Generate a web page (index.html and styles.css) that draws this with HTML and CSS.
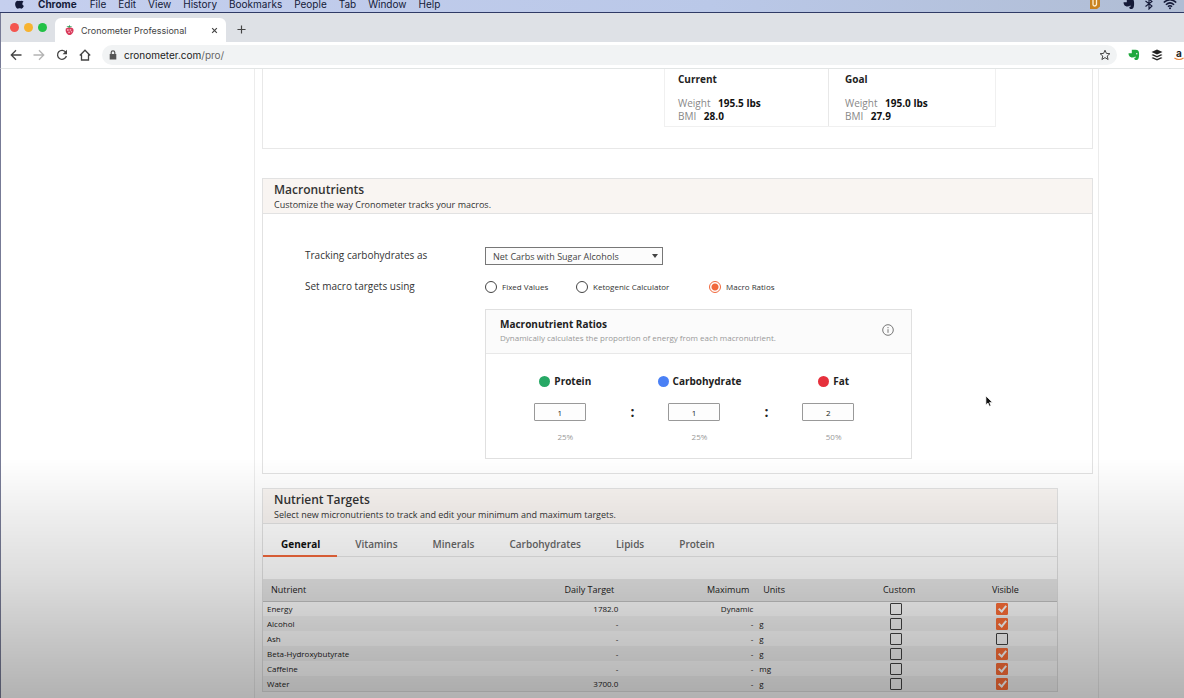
FILE: index.html
```html
<!DOCTYPE html>
<html lang="en">

<head>
    <meta charset="UTF-8">
    <meta name="viewport" content="width=device-width, initial-scale=1.0">
    <title>Cronometer Professional</title>
    <link rel="stylesheet" href="styles.css">
</head>

<body>

    <!-- System menu bar -->
    <nav class="menubar">
        <svg class="apple" viewBox="0 0 12 14"><path d="M8.2 0c.1 1.400-1 2.600-2.300 2.700C5.800 1.400 7 .2 8.200 0zM6 3.600c.7 0 1.300-.5 2.300-.5 1 0 1.900.5 2.400 1.300-2 1.200-1.700 3.900.4 4.700-.5 1.500-1.600 3.300-2.800 3.300-.8 0-1.200-.5-2.200-.5s-1.400.5-2.200.5C2.500 12.400.9 9.600.9 7.200c0-2.500 1.500-4 3.100-4 .9 0 1.500.4 2 .4z"/></svg>
        <strong>Chrome</strong>
        <span>File</span>
        <span>Edit</span>
        <span>View</span>
        <span>History</span>
        <span>Bookmarks</span>
        <span>People</span>
        <span>Tab</span>
        <span>Window</span>
        <span>Help</span>
        <div class="status">
            <svg class="status-note" viewBox="0 0 12 12"><path fill="#c98220" d="M1 0h10v8.500L8 11H1z"/><path fill="none" stroke="#fff0d0" stroke-width="1.300" d="M4 0v6.500q0 1.500 1.500 1.500T7.500 6.500V1"/></svg>
            <svg class="status-evernote" viewBox="0 0 12 12"><path fill="#141a38" d="M3.800.8h3.700c2.500.2 3.300 1 3.500 3 .2 2 .1 4.500-.6 6-.7 1.500-3.800 1.800-4.100 0-.1-1.200 1-1.500 1.800-1.200L7.300 7.400C5.500 9 2.500 8.800 1.300 7 .6 6 .5 5 .6 4.200h3.200z"/></svg>
            <svg class="status-bluetooth" viewBox="0 0 10 12"><path fill="none" stroke="#141a38" stroke-width="1.100" d="M1.500 3l6.500 5-3 3V1l3 2.500L1.500 8.500"/></svg>
            <svg class="status-wifi" viewBox="0 0 14 11"><path fill="none" stroke="#141a38" stroke-width="1.500" d="M.8 4q6.200-5.500 12.400 0M2.900 6.200q4.100-3.600 8.200 0M4.900 8.200q2.100-1.700 4.200 0"/><circle cx="7" cy="9.700" r="1" fill="#141a38"/></svg>
        </div>
    </nav>

    <!-- Browser window -->
    <header class="browser">
        <div class="tabstrip">
            <span class="dot dot-red"></span>
            <span class="dot dot-yellow"></span>
            <span class="dot dot-green"></span>
            <div class="tab">
                <svg class="favicon" viewBox="0 0 12 12"><path fill="#d8395a" d="M2 4.500C3 3 9 2.600 10 4.500c1.500 3-1.500 7-4 7S1 7.500 2 4.500z"/><path fill="#2c9a55" d="M5.500 3.500L2.500 1.500 5.300 2 6 .3l.6 1.500 2.600.3z"/><g fill="#f7a7b5"><circle cx="4.200" cy="6" r="1"/><circle cx="7" cy="5.800" r="1"/><circle cx="5.500" cy="8.500" r="1"/><circle cx="8.200" cy="8" r=".8"/></g></svg>
                <span class="tab-title">Cronometer Professional</span>
                <button class="icon-button tab-close" aria-label="Close tab"><svg viewBox="0 0 8 8"><path d="M1.300 1.300l5.400 5.400M6.700 1.300L1.300 6.700"/></svg></button>
            </div>
            <button class="icon-button new-tab" aria-label="New tab"><svg viewBox="0 0 10 10"><path d="M5 .5v9M.5 5h9"/></svg></button>
        </div>
        <div class="toolbar">
            <button class="icon-button" aria-label="Back"><svg viewBox="0 0 12 12"><path d="M11.500 6H1.500M6 1.300L1.300 6 6 10.700"/></svg></button>
            <button class="icon-button forward" aria-label="Forward"><svg viewBox="0 0 12 12"><path d="M.5 6h10M6 1.300L10.700 6 6 10.700"/></svg></button>
            <button class="icon-button" aria-label="Reload"><svg viewBox="0 0 12 12"><path d="M9.800 3.300A4.500 4.500 0 1 0 10.400 7"/><path fill="#444" stroke="none" d="M11 .8v4.400H6.600z"/></svg></button>
            <button class="icon-button" aria-label="Home"><svg viewBox="0 0 12 12"><path d="M.8 6.500L6 1.200l5.200 5.300M2.500 5.500V11h7V5.500"/></svg></button>
            <div class="address">
                <svg class="lock" viewBox="0 0 8 10"><path fill="#555" d="M.7 4h6.600v5.500H.7z"/><path fill="none" stroke="#555" stroke-width="1.200" d="M2.200 4V2.600a1.800 1.800 0 0 1 3.600 0V4"/></svg>
                <span class="url">cronometer.com<span class="path">/pro/</span></span>
                <button class="icon-button star" aria-label="Bookmark this page"><svg viewBox="0 0 12 12"><path d="M6 1.200l1.400 3.200 3.500.3-2.700 2.300.9 3.500L6 8.600l-3.100 1.900.9-3.500L1.100 4.700l3.500-.3z"/></svg></button>
            </div>
            <div class="extensions">
                <svg viewBox="0 0 12 12"><path fill="#1fa83c" d="M3.800.8h3.700c2.500.2 3.300 1 3.500 3 .2 2 .1 4.500-.6 6-.7 1.500-3.800 1.800-4.100 0-.1-1.200 1-1.500 1.800-1.200L7.300 7.400C5.500 9 2.500 8.800 1.300 7 .6 6 .5 5 .6 4.200h3.200z"/><circle cx="8.800" cy="4.800" r=".7" fill="#fff"/></svg>
                <svg viewBox="0 0 12 12"><path fill="#222" d="M6 .5l5.500 2.500L6 5.500.5 3zM.5 6L2 5.300l4 1.800 4-1.800 1.500.7L6 8.500zM.5 9L2 8.300l4 1.800 4-1.800 1.500.7L6 11.500z"/></svg>
                <div class="amazon">a<svg viewBox="0 0 12 4"><path fill="none" stroke="#e9863c" stroke-width="1.300" d="M.5.8q5.500 3.500 11 0"/></svg></div>
            </div>
        </div>
    </header>

    <main class="page">
        <div class="content">

            <section class="card profile">
                <div class="stats">
                    <div class="stat">
                        <h3>Current</h3>
                        <p>Weight <strong>195.5 lbs</strong></p>
                        <p>BMI <strong>28.0</strong></p>
                    </div>
                    <div class="stat">
                        <h3>Goal</h3>
                        <p>Weight <strong>195.0 lbs</strong></p>
                        <p>BMI <strong>27.9</strong></p>
                    </div>
                </div>
            </section>

            <section class="card macros">
                <div class="card-header">
                    <h2>Macronutrients</h2>
                    <p>Customize the way Cronometer tracks your macros.</p>
                </div>
                <div class="macro-form">
                    <label class="form-label" for="carbs">Tracking carbohydrates as</label>
                    <div class="select-wrap">
                        <select id="carbs">
                            <option>Net Carbs with Sugar Alcohols</option>
                        </select>
                    </div>
                    <span class="form-label" id="targets-label">Set macro targets using</span>
                    <div class="radios" role="radiogroup" aria-labelledby="targets-label">
                        <label><input type="radio" name="targets">Fixed Values</label>
                        <label><input type="radio" name="targets">Ketogenic Calculator</label>
                        <label><input type="radio" name="targets" checked>Macro Ratios</label>
                    </div>
                    <div class="ratio-panel">
                        <div class="ratio-header">
                            <div>
                                <h3>Macronutrient Ratios</h3>
                                <p>Dynamically calculates the proportion of energy from each macronutrient.</p>
                            </div>
                            <button class="icon-button info" aria-label="About macronutrient ratios"><svg viewBox="0 0 12 12"><circle cx="6" cy="6" r="5.300"/><path d="M6 5.200v3.600M6 3v1.200"/></svg></button>
                        </div>
                        <div class="ratios">
                            <div class="ratio">
                                <label for="protein"><span class="swatch protein"></span>Protein</label>
                                <input type="text" id="protein" value="1">
                                <span class="percent">25%</span>
                            </div>
                            <span class="colon">:</span>
                            <div class="ratio">
                                <label for="carbohydrate"><span class="swatch carbohydrate"></span>Carbohydrate</label>
                                <input type="text" id="carbohydrate" value="1">
                                <span class="percent">25%</span>
                            </div>
                            <span class="colon">:</span>
                            <div class="ratio">
                                <label for="fat"><span class="swatch fat"></span>Fat</label>
                                <input type="text" id="fat" value="2">
                                <span class="percent">50%</span>
                            </div>
                        </div>
                    </div>
                </div>
            </section>

            <section class="card targets">
                <div class="card-header">
                    <h2>Nutrient Targets</h2>
                    <p>Select new micronutrients to track and edit your minimum and maximum targets.</p>
                </div>
                <div class="tabs">
                    <button class="active">General</button>
                    <button>Vitamins</button>
                    <button>Minerals</button>
                    <button>Carbohydrates</button>
                    <button>Lipids</button>
                    <button>Protein</button>
                </div>
                <table>
                    <colgroup>
                        <col class="col-nutrient">
                        <col class="col-daily">
                        <col class="col-maximum">
                        <col class="col-units">
                        <col class="col-custom">
                        <col class="col-visible">
                    </colgroup>
                    <thead>
                        <tr>
                            <th>Nutrient</th>
                            <th class="number">Daily Target</th>
                            <th class="number">Maximum</th>
                            <th>Units</th>
                            <th class="custom">Custom</th>
                            <th class="visible">Visible</th>
                        </tr>
                    </thead>
                    <tbody>
                        <tr>
                            <td>Energy</td>
                            <td class="number">1782.0</td>
                            <td class="number">Dynamic</td>
                            <td></td>
                            <td class="custom"><input type="checkbox" aria-label="Custom Energy"></td>
                            <td class="visible"><input type="checkbox" aria-label="Visible Energy" checked></td>
                        </tr>
                        <tr>
                            <td>Alcohol</td>
                            <td class="number">-</td>
                            <td class="number">-</td>
                            <td>g</td>
                            <td class="custom"><input type="checkbox" aria-label="Custom Alcohol"></td>
                            <td class="visible"><input type="checkbox" aria-label="Visible Alcohol" checked></td>
                        </tr>
                        <tr>
                            <td>Ash</td>
                            <td class="number">-</td>
                            <td class="number">-</td>
                            <td>g</td>
                            <td class="custom"><input type="checkbox" aria-label="Custom Ash"></td>
                            <td class="visible"><input type="checkbox" aria-label="Visible Ash"></td>
                        </tr>
                        <tr>
                            <td>Beta-Hydroxybutyrate</td>
                            <td class="number">-</td>
                            <td class="number">-</td>
                            <td>g</td>
                            <td class="custom"><input type="checkbox" aria-label="Custom Beta-Hydroxybutyrate"></td>
                            <td class="visible"><input type="checkbox" aria-label="Visible Beta-Hydroxybutyrate" checked></td>
                        </tr>
                        <tr>
                            <td>Caffeine</td>
                            <td class="number">-</td>
                            <td class="number">-</td>
                            <td>mg</td>
                            <td class="custom"><input type="checkbox" aria-label="Custom Caffeine"></td>
                            <td class="visible"><input type="checkbox" aria-label="Visible Caffeine" checked></td>
                        </tr>
                        <tr>
                            <td>Water</td>
                            <td class="number">3700.0</td>
                            <td class="number">-</td>
                            <td>g</td>
                            <td class="custom"><input type="checkbox" aria-label="Custom Water"></td>
                            <td class="visible"><input type="checkbox" aria-label="Visible Water" checked></td>
                        </tr>
                    </tbody>
                </table>
            </section>

        </div>
    </main>

    <!-- Shade over the lower part of the page -->
    <div class="shade"></div>

    <svg class="cursor" viewBox="0 0 10 14"><path fill="#111" stroke="#fff" stroke-width=".8" d="M1 .8v10l2.300-2.100 1.600 3.700 1.700-.8L5.100 8H8.300z"/></svg>

</body>

</html>
```
FILE: styles.css
```css
* {
    box-sizing: border-box;
}

body {
    font-family: "Open Sans", "Noto Sans", sans-serif;
    background-color: #fff;
    color: #333;
    margin: 0;
    height: 100vh;
    overflow: hidden;
    display: flex;
    flex-direction: column;
}

h2,
h3,
p {
    margin: 0;
}

button {
    font-family: inherit;
    background: none;
    border: none;
    padding: 0;
    cursor: pointer;
}

.icon-button {
    display: flex;
    flex: none;
    width: 12px;
    height: 12px;
}

.icon-button svg {
    width: 100%;
    height: 100%;
    fill: none;
    stroke: #444;
    stroke-width: 1.3;
}

/* System menu bar */
.menubar {
    display: flex;
    flex: none;
    align-items: center;
    gap: 12px;
    height: 13px;
    padding: 0 7px 4px 14px;
    background: linear-gradient(90deg, #c5cfee, #bac8e8 60%, #b0bdd4);
    border-bottom: 1px solid #2f3a66;
    font-family: Inter, "Liberation Sans", sans-serif;
    font-size: 10px;
    line-height: 12px;
    color: #141a38;
}

.menubar strong {
    margin: 0 1px;
}

.apple {
    width: 11px;
    height: 12px;
    fill: #141a38;
}

.status {
    display: flex;
    align-items: center;
    gap: 8px;
    margin-left: auto;
}

.status svg {
    width: 12px;
    height: 12px;
}

.status .status-note {
    margin-right: 14px;
}

.status .status-wifi {
    width: 14px;
}

/* Browser window */
.browser {
    flex: none;
    background-color: #dee1e6;
    border-left: 1px solid #777b96;
    border-bottom: 1px solid #e2e5e5;
    font-family: Inter, "Liberation Sans", sans-serif;
}

.tabstrip {
    display: flex;
    align-items: center;
    gap: 5px;
    height: 29px;
    padding-left: 9px;
}

.dot {
    width: 9px;
    height: 9px;
    border-radius: 50%;
}

.dot-red {
    background-color: #f4564f;
}

.dot-yellow {
    background-color: #f7b32f;
}

.dot-green {
    background-color: #22c146;
}

.tab {
    display: flex;
    align-items: center;
    align-self: flex-end;
    gap: 6px;
    width: 171px;
    height: 24px;
    margin-left: 3px;
    padding: 0 8px 0 9px;
    background-color: #fff;
    border-radius: 6px 6px 0 0;
}

.favicon {
    width: 11px;
    height: 12px;
}

.tab-title {
    font-size: 9px;
    color: #444;
}

.tab-close {
    width: 7px;
    height: 7px;
    margin-left: auto;
}

.new-tab {
    width: 9px;
    height: 9px;
    margin: 3px 0 0 6px;
}

.toolbar {
    display: flex;
    align-items: center;
    gap: 11px;
    height: 26px;
    padding-left: 9px;
    background-color: #fff;
}

.forward {
    opacity: 0.4;
}

.address {
    display: flex;
    flex: 1;
    align-items: center;
    gap: 7px;
    height: 20px;
    padding: 0 6px 0 7px;
    background-color: #f1f3f4;
    border-radius: 10px;
}

.lock {
    width: 8px;
    height: 10px;
}

.url {
    font-size: 10px;
    color: #222;
}

.path {
    color: #666;
}

.star {
    margin-left: auto;
}

.star svg {
    stroke-width: 1;
}

.extensions {
    display: flex;
    align-items: center;
    gap: 11px;
}

.extensions > svg {
    width: 12px;
    height: 12px;
}

.amazon {
    width: 10px;
    height: 12px;
    font-size: 10px;
    line-height: 8px;
    font-weight: bold;
    text-align: center;
    color: #222;
}

.amazon svg {
    display: block;
    width: 10px;
    height: 4px;
}

/* Page */
.page {
    flex: 1;
    min-height: 0;
    padding: 0 85px 0 253px;
    border-left: 1px solid #777b96;
    overflow: hidden;
}

.content {
    display: flex;
    flex-direction: column;
    height: 100%;
    padding: 0 5px 0 7px;
    border: 1px solid #ececec;
    border-width: 0 1px;
}

.card {
    flex: none;
    border: 1px solid #e2e2e2;
}

.card-header {
    height: 35px;
    padding: 3px 11px;
    background-color: #f9f5f2;
    border-bottom: 1px solid #e2e2e2;
}

.card-header h2 {
    font-size: 12px;
    line-height: 16px;
    font-weight: 600;
}

.card-header p {
    font-size: 9px;
    line-height: 13px;
}

/* Current and goal weight */
.profile {
    display: flex;
    justify-content: flex-end;
    padding: 0 96px 21px 0;
    border-color: #e8e8e8;
    border-top: none;
}

.stats {
    display: flex;
    border: 1px solid #f0f0f0;
    border-top: none;
}

.stat {
    width: 166px;
    height: 57px;
    padding: 4px 16px;
    font-size: 10px;
    line-height: 13px;
    color: #888;
}

.stat:first-child {
    width: 164px;
    padding-left: 13px;
    border-right: 1px solid #e8e8e8;
}

.stat h3 {
    margin-bottom: 11px;
    font-size: 10px;
    line-height: 13px;
    color: #222;
}

.stat strong {
    margin-left: 5px;
    color: #111;
}

/* Macronutrients */
.macros {
    margin-top: 29px;
}

.macro-form {
    display: grid;
    grid-template-columns: 180px 1fr;
    align-items: center;
    row-gap: 14px;
    padding: 33px 42px 14px;
}

.form-label {
    padding-bottom: 2px;
    font-size: 10px;
    line-height: 14px;
}

.select-wrap {
    display: flex;
    align-items: center;
    width: 178px;
}

.select-wrap select {
    width: 100%;
    height: 18px;
    padding: 0 7px;
    appearance: none;
    background-color: #fcfcfc;
    border: 1px solid #777;
    border-radius: 0;
    font-family: inherit;
    font-size: 9px;
    color: #444;
}

.select-wrap::after {
    content: "";
    margin-left: -11px;
    border: 3px solid transparent;
    border-top: 4px solid #444;
    border-bottom: none;
    pointer-events: none;
}

.radios {
    display: grid;
    grid-template-columns: 91px 133px auto;
}

.radios label {
    display: flex;
    align-items: center;
    gap: 5px;
    font-size: 8px;
    line-height: 16px;
    white-space: nowrap;
}

.radios input {
    flex: none;
    width: 12px;
    height: 12px;
    margin: 0;
    appearance: none;
    border: 1px solid #444;
    border-radius: 50%;
}

.radios input:checked {
    border-color: #f1683c;
    background: radial-gradient(circle, #f1683c 3px, #fff 4px);
}

.ratio-panel {
    grid-column: 2;
    width: 427px;
    border: 1px solid #e0e0e0;
}

.ratio-header {
    display: flex;
    justify-content: space-between;
    align-items: center;
    height: 44px;
    padding: 0 17px 3px 14px;
    background-color: #fbfbfb;
    border-bottom: 1px solid #e8e8e8;
}

.ratio-header h3 {
    font-size: 10px;
    line-height: 14px;
    color: #222;
}

.ratio-header p {
    font-size: 8px;
    line-height: 13px;
    color: #999;
}

.info svg {
    stroke: #777;
    stroke-width: 1;
}

.ratios {
    display: grid;
    grid-template-columns: 3fr 1fr 3fr 1fr 3fr;
    align-items: center;
    padding: 19px 27px 13px 29px;
}

.ratio {
    display: flex;
    flex-direction: column;
    align-items: center;
}

.ratio label {
    display: flex;
    align-items: center;
    gap: 4px;
    font-size: 10px;
    line-height: 16px;
    font-weight: bold;
    color: #222;
}

.swatch {
    width: 11px;
    height: 11px;
    border-radius: 50%;
}

.protein {
    background-color: #27a865;
}

.carbohydrate {
    background-color: #4a80f5;
}

.fat {
    background-color: #e6303c;
}

.ratio input {
    width: 52px;
    height: 18px;
    margin: 14px 11px 8px 0;
    padding: 0;
    background-color: #fdfdfd;
    border: 1px solid #999;
    border-radius: 1px;
    font-family: inherit;
    font-size: 8px;
    text-align: center;
    color: #222;
}

.percent {
    font-size: 8px;
    line-height: 16px;
    color: #999;
}

.colon {
    padding-top: 4px;
    font-size: 14px;
    font-weight: bold;
    text-align: center;
    color: #222;
}

/* Nutrient targets */
.targets {
    margin: 14px 35px 0 0;
}

.tabs {
    display: flex;
    height: 33px;
    margin-bottom: 22px;
    border-bottom: 1px solid #e6e6e6;
}

.tabs button {
    margin-bottom: -1px;
    padding: 8px 17px 0 18px;
    border-bottom: 2px solid transparent;
    font-size: 10px;
    font-weight: 600;
    color: #666;
}

.tabs .active {
    border-color: #f1683c;
    font-weight: bold;
    color: #111;
}

table {
    width: 100%;
    table-layout: fixed;
    border-collapse: collapse;
    font-size: 8px;
    color: #222;
}

.col-nutrient {
    width: 32%;
}

.col-daily {
    width: 13%;
}

.col-maximum {
    width: 17%;
}

.col-units,
.col-custom {
    width: 12%;
}

.col-visible {
    width: 14%;
}

th {
    height: 22px;
    padding: 0 6px 0 8px;
    background-color: #e8e8e8;
    border-bottom: 1px solid #c4c4c4;
    font-size: 9px;
    font-weight: 500;
    text-align: left;
}

td {
    height: 15px;
    padding: 0 2px 0 4px;
    line-height: 14px;
}

tbody tr:nth-child(even) {
    background-color: #f5f5f5;
}

.number {
    text-align: right;
}

.custom,
.visible {
    padding: 0 0 0 2px;
    text-align: center;
}

th.visible {
    padding-left: 8px;
}

td.custom {
    padding-right: 6px;
}

td input {
    display: block;
    width: 12px;
    height: 12px;
    margin: 0 auto;
    appearance: none;
    border: 1px solid #444;
    border-radius: 1px;
}

td input:checked {
    border-color: #ff7039;
    background-color: #ff7039;
}

td input:checked::after {
    content: "";
    display: block;
    box-sizing: border-box;
    width: 5px;
    height: 8px;
    margin-left: 3px;
    border: solid #fff;
    border-width: 0 2px 2px 0;
    transform: rotate(40deg);
}

.shade {
    position: fixed;
    left: 0;
    right: 0;
    bottom: 0;
    height: 240px;
    background: linear-gradient(rgba(0, 0, 0, 0), rgba(0, 0, 0, 0.07) 25%, rgba(0, 0, 0, 0.13) 48%, rgba(0, 0, 0, 0.22) 75%, rgba(0, 0, 0, 0.3));
    pointer-events: none;
}

.cursor {
    position: absolute;
    left: 985px;
    top: 395px;
    width: 9px;
    height: 13px;
}
```
